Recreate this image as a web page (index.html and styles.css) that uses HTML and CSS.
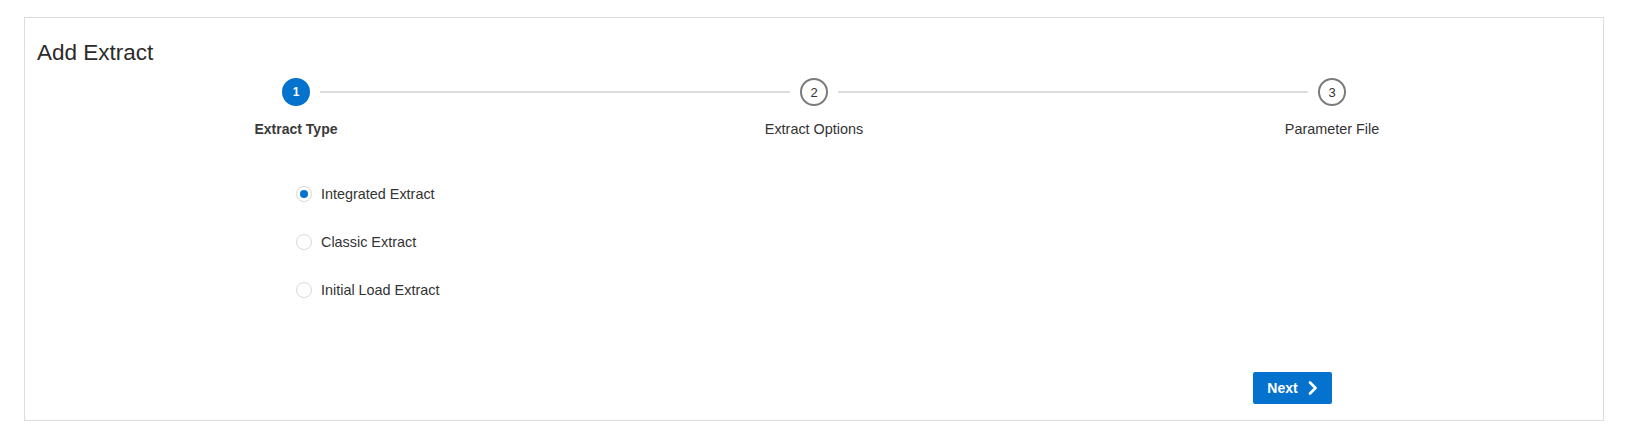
FILE: index.html
```html
<!DOCTYPE html>
<html lang="en">
<head>
<meta charset="utf-8">
<title>Add Extract</title>
<link rel="stylesheet" href="styles.css">
</head>
<body>
<div class="panel">
  <h1 class="title">Add Extract</h1>
  <div class="train">
    <div class="step">
      <div class="step-track">
        <span class="line hidden"></span>
        <span class="circle active">1</span>
        <span class="line"></span>
      </div>
      <div class="step-label active">Extract Type</div>
    </div>
    <div class="step">
      <div class="step-track">
        <span class="line"></span>
        <span class="circle">2</span>
        <span class="line"></span>
      </div>
      <div class="step-label">Extract Options</div>
    </div>
    <div class="step">
      <div class="step-track">
        <span class="line"></span>
        <span class="circle">3</span>
        <span class="line hidden"></span>
      </div>
      <div class="step-label">Parameter File</div>
    </div>
  </div>
  <div class="form">
    <div class="radios">
      <label class="radio-row"><input type="radio" name="etype" checked><span>Integrated Extract</span></label>
      <label class="radio-row"><input type="radio" name="etype"><span>Classic Extract</span></label>
      <label class="radio-row"><input type="radio" name="etype"><span>Initial Load Extract</span></label>
    </div>
    <div class="actions">
      <button class="btn-next" type="button">Next
        <svg width="10" height="14" viewBox="0 0 10 14" aria-hidden="true"><polyline points="2,1.5 7.5,7 2,12.5" fill="none" stroke="#fff" stroke-width="2.6" stroke-linecap="round" stroke-linejoin="round"/></svg>
      </button>
    </div>
  </div>
</div>
</body>
</html>
```

FILE: styles.css
```css
* { box-sizing: border-box; }

html, body {
  margin: 0;
  background: #ffffff;
}

body {
  padding: 17px 0 0 24px;
  font-family: "Liberation Sans", Arial, sans-serif;
  color: #333333;
}

.panel {
  width: 1580px;
  border: 1px solid #dcdcdc;
  padding: 21px 12px 16px 12px;
}

.title {
  margin: 0;
  font-size: 22.5px;
  line-height: 28px;
  font-weight: normal;
  color: #2b2b2b;
}

.train {
  margin-top: 11px;
  display: grid;
  grid-template-columns: repeat(3, 1fr);
}

.step {
  display: flex;
  flex-direction: column;
  align-items: center;
}

.step-track {
  width: 100%;
  display: flex;
  align-items: center;
  height: 28px;
}

.line {
  flex: 1;
  height: 2px;
  background: #dddddd;
}

.line:first-child { margin-right: 10px; }
.line:last-child { margin-left: 10px; }

.line.hidden { visibility: hidden; }

.circle {
  width: 28px;
  height: 28px;
  border-radius: 50%;
  border: 2px solid #7b7b7b;
  display: flex;
  align-items: center;
  justify-content: center;
  font-size: 13px;
  color: #333333;
  flex: none;
}

.circle.active {
  background: #0572ce;
  border-color: #0572ce;
  color: #ffffff;
  font-size: 12px;
  font-weight: bold;
}

.step-label {
  margin-top: 13px;
  font-size: 14.4px;
  line-height: 20px;
  color: #333333;
}

.step-label.active {
  font-size: 14px;
  font-weight: bold;
  color: #3a3a3a;
}

.form {
  margin: 31px 259px 0 259px;
}

.radios {
  display: flex;
  flex-direction: column;
}

.radio-row {
  height: 48px;
  display: flex;
  align-items: center;
  gap: 9px;
  font-size: 14.4px;
  color: #333333;
}

.radio-row input {
  appearance: none;
  -webkit-appearance: none;
  margin: 0;
  width: 16px;
  height: 16px;
  border-radius: 50%;
  border: 1px solid #d6dade;
  background: #ffffff;
  display: flex;
  align-items: center;
  justify-content: center;
}

.radio-row input:checked::after {
  content: "";
  width: 8px;
  height: 8px;
  border-radius: 50%;
  background: #0572ce;
}

.actions {
  margin-top: 58px;
  display: flex;
  justify-content: flex-end;
}

.btn-next {
  height: 32px;
  width: 79px;
  border: none;
  border-radius: 2px;
  background: #0572ce;
  color: #ffffff;
  font-family: "Liberation Sans", Arial, sans-serif;
  font-size: 14px;
  font-weight: bold;
  display: flex;
  align-items: center;
  justify-content: center;
  gap: 10px;
  padding: 0;
}
```
